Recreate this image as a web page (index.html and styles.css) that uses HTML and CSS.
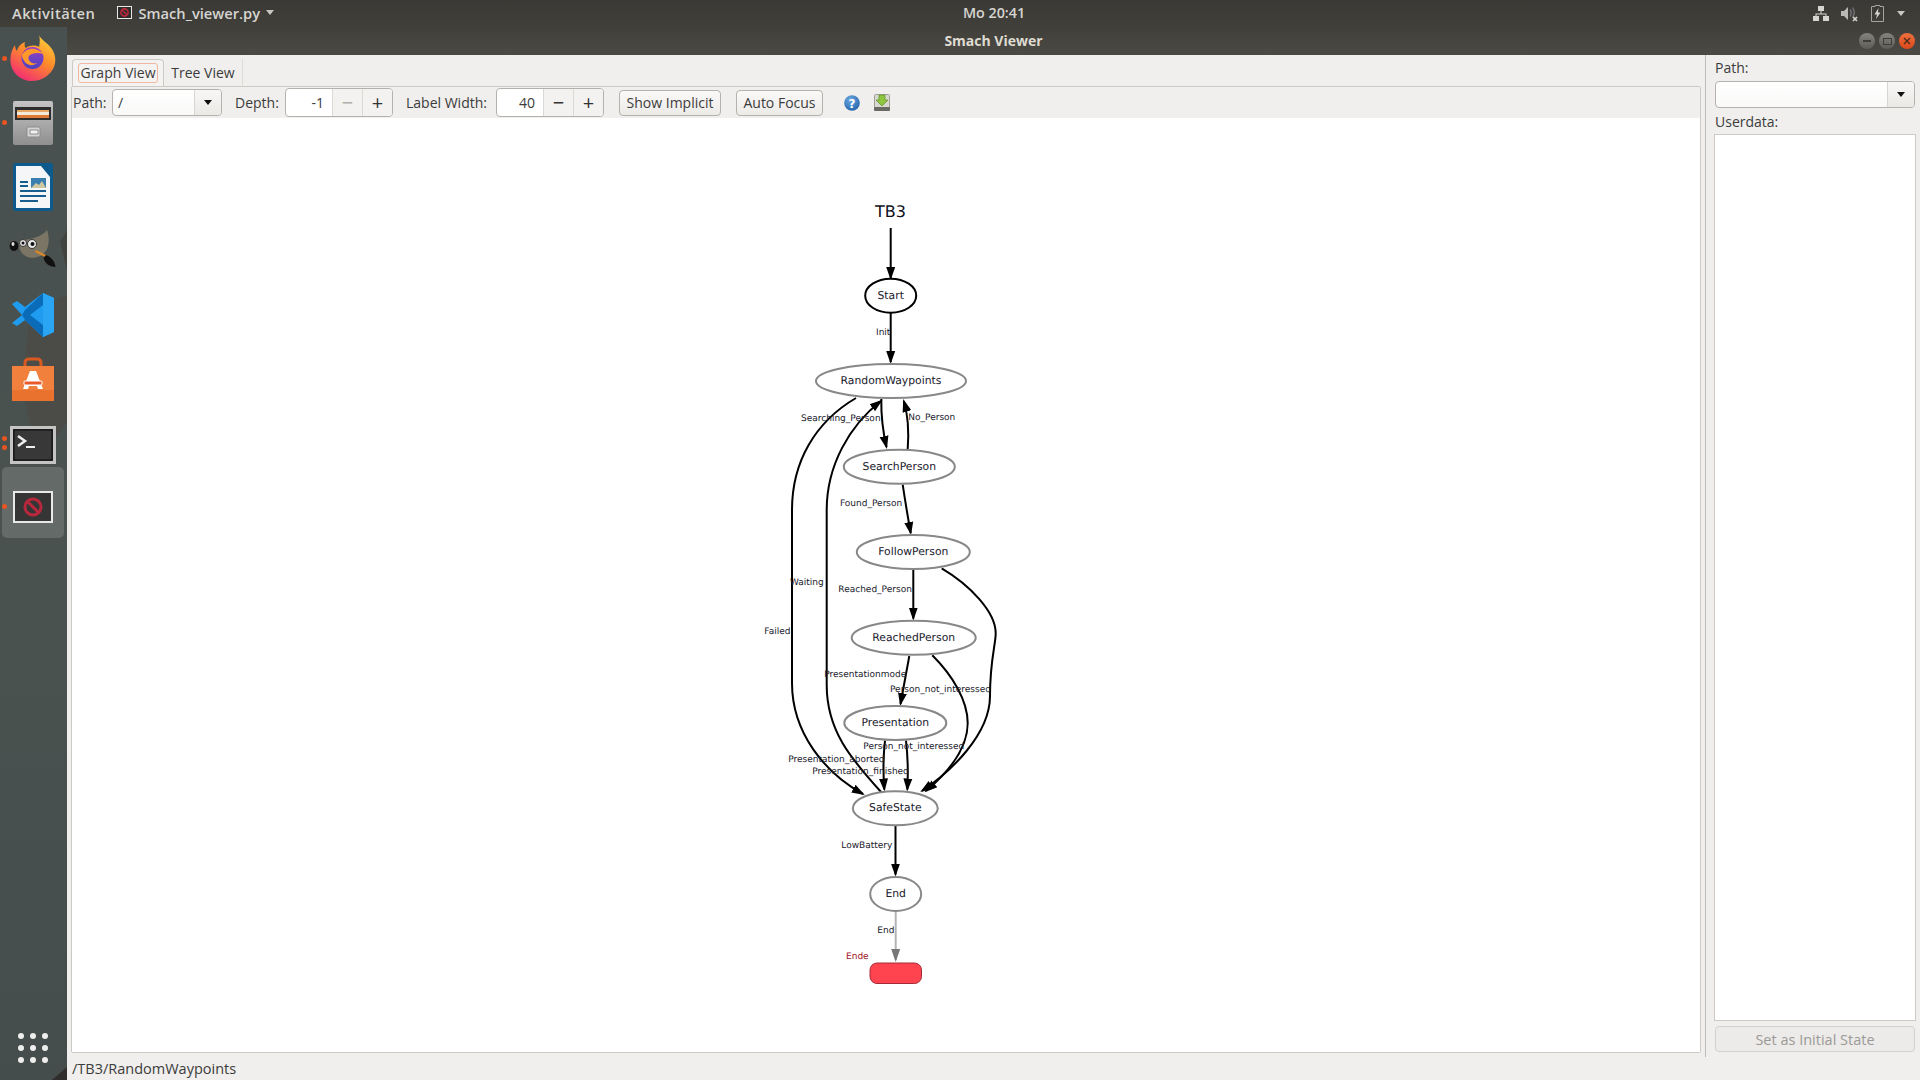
FILE: index.html
```html
<!DOCTYPE html>
<html>
	<head>
		<meta charset="UTF-8">
		<title>Smach Viewer</title>
		<link rel="stylesheet" href="styles.css">
	</head>
	<body>
		<!-- gnome top bar -->
		<div class="topbar">
			<div class="top-left">
				<span class="top-item activities">Aktivitäten</span>
				<span class="top-item app-menu">
					<svg class="app-icon" width="15" height="13" viewBox="0 0 15 13">
						<rect x="0.5" y="0.5" width="14" height="12" fill="#2e2d2b" stroke="#e8e8e8"/>
						<circle cx="7.5" cy="6.5" r="3.6" fill="none" stroke="#c0283c" stroke-width="1.6"/>
						<path d="M5 4l5 5" stroke="#c0283c" stroke-width="1.4"/>
					</svg>
					Smach_viewer.py
					<i class="caret"></i>
				</span>
			</div>
			<div class="clock">Mo 20:41</div>
			<div class="top-right">
				<svg width="16" height="15" viewBox="0 0 16 15" fill="#d6d5d1">
					<rect x="5" y="0" width="6" height="5"/>
					<rect x="0" y="10" width="6" height="5"/>
					<rect x="10" y="10" width="6" height="5"/>
					<path d="M7.5 5h1v2.5H13.5V10h-1V8.500h-9V10h-1V7.500H7.500z"/>
				</svg>
				<svg width="18" height="16" viewBox="0 0 18 16">
					<path d="M0 5h3l4-4v13l-4-4H0z" fill="#b9b8b4"/>
					<path d="M9 3.500q2.500 3.500 0 7M11.500 1.500q3.500 5 0 10" fill="none" stroke="#77767a" stroke-width="1.300"/>
					<path d="M12 11l4 4M16 11l-4 4" stroke="#d6d5d1" stroke-width="1.700"/>
				</svg>
				<svg width="13" height="17" viewBox="0 0 13 17">
					<path d="M4 1.500V.5h5v1h3.500v15H.5v-15z" fill="none" stroke="#a5a4a0"/>
					<path d="M7.500 3L3.500 9.500h2.500L5 14l4.500-6.500H7z" fill="#d6d5d1"/>
				</svg>
				<i class="caret caret-wide"></i>
			</div>
		</div>

		<div class="desktop">
			<!-- launcher on the left -->
			<div class="dock">
				<svg class="wallpaper" width="67" height="1053" viewBox="0 0 67 1053">
					<path d="M30 285L67 268V395L38 435L22 360z" fill="#4d4640" opacity="0.5"/>
					<path d="M60 215l7-12v40z" fill="#3e3a36" opacity="0.6"/>
					<path d="M52 1053L67 1040v13z" fill="#2f2e2c"/>
				</svg>
				<div class="dock-item">
					<i class="run-dot"></i>
					<svg width="46" height="48" viewBox="0 0 46 48">
						<defs>
							<linearGradient id="foxBody" x1="0.8" y1="0" x2="0.2" y2="1">
								<stop offset="0" stop-color="#ffd23c"/>
								<stop offset="0.45" stop-color="#ff8a2a"/>
								<stop offset="1" stop-color="#f0267a"/>
							</linearGradient>
							<linearGradient id="foxBall" x1="0.5" y1="0" x2="0.5" y2="1">
								<stop offset="0" stop-color="#9a3cc8"/>
								<stop offset="1" stop-color="#4a44c0"/>
							</linearGradient>
						</defs>
						<path d="M29 0c2 5 9 8 13 14 5 8 4 17-1 23-5 6-12 9-19 9C11 46 1 38 0.500 26 0 20 2 14 5 10c0 3 1 5 2 6 1-5 5-8 8-9-1 3 0 5 1 6 4-3 9-3 13-1 1-4 1-9 0-12z" fill="url(#foxBody)"/>
						<circle cx="22.500" cy="23" r="11" fill="url(#foxBall)"/>
						<path d="M12 20c2-4 7-7 13-6 4 1 7 3 8 5-5-2-10-1-13 1-2 2-2 3-1 5 1 3 5 4 8 3-3 3-9 3-12-1-2-2-3-5-3-7z" fill="#ff9a2a"/>
					</svg>
				</div>
				<div class="dock-item">
					<i class="run-dot"></i>
					<svg width="40" height="44" viewBox="0 0 40 44">
						<defs>
							<linearGradient id="cabinet" x1="0" y1="0" x2="0" y2="1">
								<stop offset="0" stop-color="#c4c4c4"/>
								<stop offset="1" stop-color="#8f8f8f"/>
							</linearGradient>
						</defs>
						<rect width="40" height="44" rx="2" fill="url(#cabinet)"/>
						<rect x="2" y="6" width="36" height="13" fill="#2d2d2d"/>
						<rect x="4" y="9" width="32" height="2" fill="#e8a868"/>
						<rect x="4" y="11" width="32" height="3" fill="#f4e8d8"/>
						<rect x="4" y="14" width="32" height="3" fill="#e07a34"/>
						<rect x="14" y="26" width="13" height="10" rx="1.500" fill="#d6d6d6" stroke="#8a8a8a"/>
						<rect x="17" y="29" width="8" height="4" fill="#f2f2f2" stroke="#555" stroke-width="0.600"/>
					</svg>
				</div>
				<div class="dock-item">
					<svg width="40" height="48" viewBox="0 0 40 48">
						<rect width="40" height="48" rx="2" fill="#0d5a8c"/>
						<path d="M3 3h25l9 11v31H3z" fill="#f4f6f8"/>
						<path d="M29 1h10v11z" fill="#0d5a8c"/>
						<path d="M7 18h8v2H7zM7 22h8v2H7zM7 27h26v2H7zM7 32h26v2H7zM7 37h18v2H7z" fill="#175e8e"/>
						<rect x="18" y="15" width="15" height="10" fill="#3a7fb0"/>
						<path d="M18 25l5-5 3 2 3-4 4 7z" fill="#d0c8a0"/>
					</svg>
				</div>
				<div class="dock-item">
					<svg width="48" height="42" viewBox="0 0 48 42">
						<path d="M10 11C20 9 32 8 38 0C41 8 40 18 36 22C31 28 22 30 15 25C11 22 9 16 10 11z" fill="#7b7565"/>
						<ellipse cx="5" cy="16" rx="5" ry="5.500" fill="#111" stroke="#555"/>
						<ellipse cx="4" cy="14" rx="1.500" ry="2" fill="#e0e0e0"/>
						<circle cx="14" cy="13" r="3.500" fill="#e8e8e8" stroke="#333"/>
						<circle cx="14" cy="13" r="1.500" fill="#111"/>
						<circle cx="23" cy="14" r="4.500" fill="#e8e8e8" stroke="#333"/>
						<circle cx="23.500" cy="14" r="2" fill="#111"/>
						<path d="M26.500 21l12 6" stroke="#d8862c" stroke-width="2.500"/>
						<path d="M37 25c4 1 9 6 9.500 12-6 0-11-4-12-9z" fill="#111"/>
					</svg>
				</div>
				<div class="dock-item">
					<svg width="42" height="44" viewBox="0 0 42 44">
						<path d="M31 0l11 5v34l-11 5-18-17-8 6-5-3 10-8L0 11l5-3 8 6z" fill="#1f9cf0"/>
						<path d="M31 0v44L13 27l-3-5 3-5zM31 12L18 22l13 10z" fill="#0a6cb8" fill-rule="evenodd"/>
						<path d="M31 0l11 5v34l-11 5z" fill="#2aa5f4"/>
					</svg>
				</div>
				<div class="dock-item">
					<svg width="42" height="44" viewBox="0 0 42 44">
						<path d="M13 13V6q0-4 4-4h8q4 0 4 4v7" fill="none" stroke="#d85a22" stroke-width="3"/>
						<rect y="9" width="42" height="35" fill="#f0803c"/>
						<rect y="33" width="42" height="11" fill="#e8722e"/>
						<path d="M18 14h6l7 18h-5l-1-3h-8l-1 3h-5z" fill="#fff"/>
						<rect x="12" y="24" width="18" height="4" rx="1" fill="#e85a2a" stroke="#fff"/>
					</svg>
				</div>
				<div class="dock-item">
					<i class="run-dot run-dot-two"></i>
					<svg class="icon-terminal" width="46" height="38" viewBox="0 0 46 38">
						<rect x="1.500" y="1.500" width="43" height="35" fill="#2c2c2c" stroke="#c4c4c4" stroke-width="3"/>
						<rect x="4" y="4" width="38" height="30" fill="#383838" stroke="#0c0c0c"/>
						<path d="M8 10l7 5-7 5" fill="none" stroke="#eee" stroke-width="2.500"/>
						<rect x="16" y="20" width="9" height="2" fill="#eee"/>
					</svg>
				</div>
				<div class="dock-item dock-active">
					<i class="run-dot"></i>
					<svg width="40" height="32" viewBox="0 0 40 32">
						<rect x="1" y="1" width="38" height="30" fill="#353535" stroke="#e8e8e8" stroke-width="2"/>
						<circle cx="20" cy="16" r="8" fill="none" stroke="#b8283c" stroke-width="3"/>
						<path d="M14.500 10.500l11 11" stroke="#b8283c" stroke-width="3"/>
					</svg>
				</div>
				<div class="apps-grid">
					<i></i><i></i><i></i><i></i><i></i><i></i><i></i><i></i><i></i>
				</div>
			</div>

			<div class="window">
				<div class="titlebar">
					<span class="win-title">Smach Viewer</span>
					<div class="win-buttons">
						<span class="win-btn"><i class="glyph-min"></i></span>
						<span class="win-btn"><i class="glyph-max"></i></span>
						<span class="win-btn win-close">
							<svg width="8" height="8" viewBox="0 0 8 8"><path d="M1 1l6 6M7 1L1 7" stroke="#4a2a1a" stroke-width="1.300"/></svg>
						</span>
					</div>
				</div>

				<div class="win-body">
					<div class="panes">
						<!-- notebook with the graph -->
						<div class="main-pane">
							<div class="tabs">
								<span class="tab tab-on"><span class="tab-focus">Graph View</span></span>
								<span class="tab">Tree View</span>
							</div>
							<div class="tab-frame">
								<div class="toolbar">
									<label class="tool-label label-path">Path:</label>
									<div class="combo combo-path">
										<span class="combo-entry">/</span>
										<span class="combo-btn"><i class="combo-arrow"></i></span>
									</div>
									<label class="tool-label label-depth">Depth:</label>
									<div class="spin">
										<span class="spin-entry">-1</span>
										<span class="spin-btn spin-off">&minus;</span>
										<span class="spin-btn">+</span>
									</div>
									<label class="tool-label label-width">Label Width:</label>
									<div class="spin">
										<span class="spin-entry">40</span>
										<span class="spin-btn">&minus;</span>
										<span class="spin-btn">+</span>
									</div>
									<button class="btn btn-implicit">Show Implicit</button>
									<button class="btn btn-focus">Auto Focus</button>
									<svg class="tool-help" width="16" height="16" viewBox="0 0 16 16">
										<defs>
											<radialGradient id="helpBall" cx="0.4" cy="0.3" r="0.8">
												<stop offset="0" stop-color="#6fa8e0"/>
												<stop offset="1" stop-color="#1e5fa8"/>
											</radialGradient>
										</defs>
										<circle cx="8" cy="8" r="7.800" fill="url(#helpBall)"/>
										<text x="8" y="12.500" class="help-mark">?</text>
									</svg>
									<svg class="tool-save" width="16" height="17" viewBox="0 0 16 17">
										<rect x="0.500" y="0.500" width="15" height="15" rx="1" fill="#d8d8d0" stroke="#a0a098"/>
										<rect y="13" width="16" height="4" rx="1" fill="#6a6a64"/>
										<path d="M5 1h6v5h3l-6 6-6-6h3z" fill="#8ec63f" stroke="#5e8c22" stroke-width="0.700"/>
									</svg>
								</div>
								<div class="canvas">
									<svg class="graph" viewBox="72 118 1628 934" preserveAspectRatio="xMinYMin meet">
										<defs>
											<marker id="head" markerUnits="userSpaceOnUse" markerWidth="14" markerHeight="12" refX="11" refY="6" orient="auto">
												<path d="M0 1.500L13 6L0 10.500z" fill="#000"/>
											</marker>
											<marker id="headGray" markerUnits="userSpaceOnUse" markerWidth="14" markerHeight="12" refX="11" refY="6" orient="auto">
												<path d="M0 1.500L13 6L0 10.500z" fill="#777"/>
											</marker>
										</defs>

										<text class="graph-title" x="890.500" y="217">TB3</text>

										<path class="edge" d="M890.700 228V278" marker-end="url(#head)"/>
										<path class="edge" d="M890.700 313V362" marker-end="url(#head)"/>
										<path class="edge" d="M856 398C815 422 792 462 792 510V683C792 733 825 773 863 794" marker-end="url(#head)"/>
										<path class="edge" d="M882 793C850 758 826.700 730 826.700 685V510C826.700 465 850 425 881 401" marker-end="url(#head)"/>
										<path class="edge" d="M881.300 399C881 418 883 432 886.500 447" marker-end="url(#head)"/>
										<path class="edge" d="M907.700 449C909 432 908 415 903.800 401" marker-end="url(#head)"/>
										<path class="edge" d="M902.700 484.700C905 500 908 518 910.700 533" marker-end="url(#head)"/>
										<path class="edge" d="M913.300 570V618.500" marker-end="url(#head)"/>
										<path class="edge" d="M941.700 568.300C970 585 995.700 612 995.700 633C995.700 645 990 660 990 696C990 735 950 772 922 791" marker-end="url(#head)"/>
										<path class="edge" d="M909.300 656L900.500 704" marker-end="url(#head)"/>
										<path class="edge" d="M932.300 655.300C952 675 967.700 700 967.700 723C967.700 750 945 775 926 791" marker-end="url(#head)"/>
										<path class="edge" d="M885 740.700C883 758 883 772 884.300 789.500" marker-end="url(#head)"/>
										<path class="edge" d="M906 740.700C908 758 908.300 772 907.300 789.500" marker-end="url(#head)"/>
										<path class="edge" d="M895.500 826V874.500" marker-end="url(#head)"/>
										<path class="edge edge-end" d="M895.700 911V960" marker-end="url(#headGray)"/>

										<ellipse class="node node-start" cx="890.700" cy="295.700" rx="25.500" ry="17"/>
										<ellipse class="node" cx="891" cy="381" rx="75" ry="17"/>
										<ellipse class="node" cx="899.300" cy="466.700" rx="55.500" ry="17"/>
										<ellipse class="node" cx="913.300" cy="552" rx="56.500" ry="17"/>
										<ellipse class="node" cx="913.700" cy="637.700" rx="62" ry="17"/>
										<ellipse class="node" cx="895.300" cy="723" rx="51" ry="17"/>
										<ellipse class="node" cx="895.300" cy="808.300" rx="42.500" ry="17"/>
										<ellipse class="node" cx="895.700" cy="894" rx="25.500" ry="17"/>
										<rect class="node-final" x="870" y="963" width="51.500" height="20.500" rx="7"/>

										<text class="node-text" x="890.700" y="299">Start</text>
										<text class="node-text" x="891" y="384">RandomWaypoints</text>
										<text class="node-text" x="899.300" y="470">SearchPerson</text>
										<text class="node-text" x="913.300" y="555">FollowPerson</text>
										<text class="node-text" x="913.700" y="641">ReachedPerson</text>
										<text class="node-text" x="895.300" y="726">Presentation</text>
										<text class="node-text" x="895.300" y="811">SafeState</text>
										<text class="node-text" x="895.700" y="897">End</text>

										<text class="edge-text" x="876" y="335">Init</text>
										<text class="edge-text" x="801" y="421">Searching_Person</text>
										<text class="edge-text" x="908.300" y="420">No_Person</text>
										<text class="edge-text" x="840" y="506">Found_Person</text>
										<text class="edge-text" x="790" y="585">Waiting</text>
										<text class="edge-text" x="838.300" y="592">Reached_Person</text>
										<text class="edge-text" x="764.300" y="634">Failed</text>
										<text class="edge-text" x="824.300" y="677">Presentationmode</text>
										<text class="edge-text" x="890" y="692">Person_not_interessed</text>
										<text class="edge-text" x="863.300" y="749">Person_not_interessed</text>
										<text class="edge-text" x="788.300" y="762">Presentation_aborted</text>
										<text class="edge-text" x="812.300" y="774">Presentation_finished</text>
										<text class="edge-text" x="841.300" y="848">LowBattery</text>
										<text class="edge-text" x="877.300" y="933">End</text>
										<text class="edge-text edge-text-red" x="846" y="959">Ende</text>
									</svg>
								</div>
							</div>
						</div>

						<div class="pane-handle"></div>

						<!-- state info on the right -->
						<div class="side-pane">
							<label class="side-label">Path:</label>
							<div class="combo combo-side">
								<span class="combo-entry"></span>
								<span class="combo-btn"><i class="combo-arrow"></i></span>
							</div>
							<label class="side-label side-label-data">Userdata:</label>
							<div class="userdata"></div>
							<button class="btn btn-initial">Set as Initial State</button>
						</div>
					</div>
					<div class="statusbar">/TB3/RandomWaypoints</div>
				</div>
			</div>
		</div>
	</body>
</html>
```

FILE: styles.css
```css
* {
	margin: 0;
	padding: 0;
	box-sizing: border-box;
}

html, body {
	width: 1920px;
	height: 1080px;
	overflow: hidden;
}

body {
	display: flex;
	flex-direction: column;
	font-family: "Open Sans", "Noto Sans", sans-serif;
	font-size: 14px;
	color: #3c3c3c;
	background: #48514f;
}

i {
	display: block;
}

/* top bar */
.topbar {
	height: 27px;
	flex: none;
	display: grid;
	grid-template-columns: 1fr auto 1fr;
	align-items: center;
	background: linear-gradient(#3a3935, #403f3a);
	color: #d6d5d1;
	font-weight: 600;
	font-size: 14.700px;
}

.top-left {
	display: flex;
	align-items: center;
	margin-bottom: 2px;
}

.top-item {
	display: flex;
	align-items: center;
}

.activities {
	margin-left: 12px;
	letter-spacing: 0.5px;
}

.app-menu {
	margin-left: 22px;
	gap: 6px;
}

.caret {
	width: 0;
	height: 0;
	border-left: 4.500px solid transparent;
	border-right: 4.500px solid transparent;
	border-top: 5px solid #c8c7c3;
}

.caret-wide {
	margin-left: 1px;
}

.clock {
	margin-left: 68px;
	margin-bottom: 2px;
	font-size: 14.300px;
	font-weight: 600;
}

.top-right {
	display: flex;
	align-items: center;
	justify-content: flex-end;
	gap: 12px;
	padding-right: 15px;
}

/* layout below the top bar */
.desktop {
	flex: 1;
	display: flex;
	min-height: 0;
}

/* launcher */
.dock {
	position: relative;
	width: 67px;
	flex: none;
	display: flex;
	flex-direction: column;
	background: linear-gradient(#48514f, #49524f 60%, #444d4c);
}

.wallpaper {
	position: absolute;
	left: 0;
	top: 0;
}

.dock-item {
	position: relative;
	height: 64px;
	flex: none;
	display: flex;
	align-items: center;
	justify-content: center;
	padding-right: 1px;
}

.dock-active::before {
	content: "";
	position: absolute;
	left: 2px;
	right: 3px;
	top: -8px;
	bottom: 1px;
	border-radius: 5px;
	background: rgba(255, 255, 255, 0.15);
}

.dock-item svg {
	position: relative;
}

.icon-terminal {
	margin-top: 3px;
}

.run-dot {
	position: absolute;
	left: 2px;
	top: 29px;
	width: 5px;
	height: 5px;
	border-radius: 50%;
	background: #e95420;
}

.run-dot-two {
	top: 25px;
	box-shadow: 0 9px 0 #e95420;
}

.apps-grid {
	position: absolute;
	left: 18px;
	bottom: 17px;
	display: grid;
	grid-template-columns: repeat(3, 6px);
	gap: 6px;
}

.apps-grid i {
	width: 6px;
	height: 6px;
	border-radius: 50%;
	background: #eeeeec;
}

/* window */
.window {
	flex: 1;
	display: flex;
	flex-direction: column;
	min-width: 0;
}

.titlebar {
	position: relative;
	height: 28px;
	flex: none;
	display: flex;
	align-items: center;
	justify-content: center;
	padding-bottom: 2px;
	background: linear-gradient(#403f3a, #4b4a44);
	color: #dfdbd2;
	font-weight: 700;
	font-size: 14px;
}

.win-buttons {
	position: absolute;
	right: 5px;
	top: 6px;
	display: flex;
	gap: 4px;
}

.win-btn {
	width: 16px;
	height: 16px;
	border-radius: 50%;
	display: flex;
	align-items: center;
	justify-content: center;
	background: linear-gradient(#85837d, #5c5b55);
}

.win-close {
	background: linear-gradient(#f0703e, #d9481c);
}

.glyph-min {
	width: 8px;
	height: 2px;
	background: #3f3e39;
}

.glyph-max {
	width: 9px;
	height: 7px;
	border: 1.500px solid #3f3e39;
}

.win-body {
	flex: 1;
	display: flex;
	flex-direction: column;
	min-height: 0;
	background: #f0efed;
}

.panes {
	flex: 1;
	display: flex;
	min-height: 0;
}

/* notebook */
.main-pane {
	width: 1638px;
	flex: none;
	display: flex;
	flex-direction: column;
	padding: 4px;
}

.tabs {
	display: flex;
	height: 27px;
	flex: none;
	padding-left: 1px;
}

.tab {
	display: flex;
	align-items: center;
	padding: 0 6px;
	border-right: 1px solid #dedcd8;
	width: 79px;
	justify-content: center;
}

.tab-on {
	width: 92px;
	background: #f4f3f1;
	border: 1px solid #cdcac5;
	border-bottom: none;
	border-radius: 4px 4px 0 0;
}

.tab-focus {
	border: 1px solid #f0b8a0;
	border-radius: 3px;
	padding: 0 1px;
	height: 20px;
	line-height: 18px;
	white-space: nowrap;
}

.tab-frame {
	flex: 1;
	display: flex;
	flex-direction: column;
	min-height: 0;
	border: 1px solid #cdcac5;
	border-radius: 2px;
}

.toolbar {
	height: 31px;
	flex: none;
	display: flex;
	align-items: center;
	background: #f0efed;
}

.tool-label {
	flex: none;
	white-space: nowrap;
}

.label-path {
	width: 39px;
	margin-left: 1px;
}

.label-depth {
	width: 50px;
	margin-left: 13px;
}

.label-width {
	width: 90px;
	margin-left: 13px;
}

.combo {
	display: flex;
	height: 27px;
	border: 1px solid #b5b2ad;
	border-radius: 4px;
	background: linear-gradient(#fff, #f9f9f8);
}

.combo-path {
	width: 110px;
}

.combo-entry {
	flex: 1;
	padding-left: 5px;
	line-height: 25px;
}

.combo-btn {
	width: 27px;
	flex: none;
	display: flex;
	align-items: center;
	justify-content: center;
	border-left: 1px solid #d8d6d2;
	background: linear-gradient(#f8f7f6, #ebe9e6);
	border-radius: 0 3px 3px 0;
}

.combo-arrow {
	width: 0;
	height: 0;
	border-left: 4.500px solid transparent;
	border-right: 4.500px solid transparent;
	border-top: 5px solid #111;
}

.spin {
	display: flex;
	width: 108px;
	height: 29px;
	border: 1px solid #b5b2ad;
	border-radius: 4px;
	background: #fff;
}

.spin-entry {
	width: 46px;
	text-align: right;
	padding-right: 8px;
	line-height: 27px;
}

.spin-btn {
	flex: 1;
	display: flex;
	align-items: center;
	justify-content: center;
	border-left: 1px solid #dbd9d5;
	font-size: 20px;
	color: #333;
	background: #f3f2f0;
}

.spin-btn:last-child {
	border-radius: 0 3px 3px 0;
}

.spin-off {
	color: #b0afab;
}

.btn {
	font: inherit;
	color: inherit;
	height: 26px;
	border: 1px solid #b5b2ad;
	border-radius: 4px;
	background: linear-gradient(#faf9f8, #ecebe8);
	white-space: nowrap;
}

.btn-implicit {
	width: 102px;
	margin-left: 15px;
}

.btn-focus {
	width: 87px;
	margin-left: 15px;
}

.tool-help {
	margin-left: 21px;
}

.tool-save {
	margin-left: 14px;
}

.help-mark {
	font-family: "DejaVu Sans", sans-serif;
	font-size: 12px;
	font-weight: 700;
	text-anchor: middle;
	fill: #fff;
}

/* graph */
.canvas {
	flex: 1;
	min-height: 0;
	background: #fff;
}

.graph {
	display: block;
	width: 100%;
	height: 100%;
	font-family: "DejaVu Sans", sans-serif;
	text-rendering: geometricPrecision;
}

.graph-title {
	font-size: 16px;
	text-anchor: middle;
	fill: #10101c;
}

.edge {
	fill: none;
	stroke: #000;
	stroke-width: 2;
}

.edge-end {
	stroke: #b4b4b4;
}

.node {
	fill: #fff;
	stroke: #888;
	stroke-width: 2;
}

.node-start {
	stroke: #000;
}

.node-final {
	fill: #ff4450;
	stroke: #a52a38;
	stroke-width: 1;
}

.node-text {
	font-size: 10.800px;
	text-anchor: middle;
	fill: #20202c;
}

.edge-text {
	font-size: 9px;
	fill: #20202c;
}

.edge-text-red {
	fill: #a01024;
}

/* right pane */
.pane-handle {
	width: 1px;
	flex: none;
	background: #bdbab5;
}

.side-pane {
	flex: 1;
	display: flex;
	flex-direction: column;
	padding: 4px 5px 5px 9px;
	min-width: 0;
}

.side-label {
	height: 22px;
	line-height: 18px;
}

.side-label-data {
	margin-top: 5px;
	height: 21px;
}

.combo-side {
	width: 200px;
	flex: none;
}

.userdata {
	flex: 1;
	margin-left: -1px;
	margin-right: -1px;
	background: #fff;
	border: 1px solid #cdcac5;
}

.btn-initial {
	margin-top: 5px;
	flex: none;
	height: 26px;
	font-size: 14.500px;
	color: #9b9a96;
	background: #ecebe9;
	border-color: #d3d1cd;
}

.statusbar {
	height: 23px;
	flex: none;
	padding-left: 5px;
	line-height: 24px;
	font-size: 14.500px;
}
```
